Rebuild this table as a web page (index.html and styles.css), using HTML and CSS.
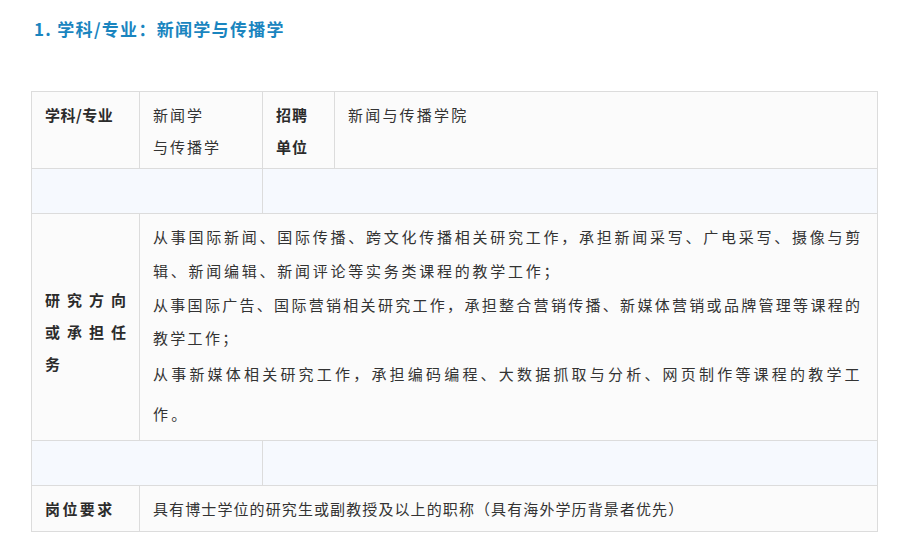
FILE: index.html
```html
<!DOCTYPE html>
<html lang="zh-CN">
<head>
<meta charset="utf-8">
<title>新闻学与传播学</title>
<link rel="stylesheet" href="styles.css">
</head>
<body>
<div class="page">
  <h3 class="title">1. 学科/专业：新闻学与传播学</h3>
  <table class="job">
    <colgroup>
      <col class="c1"><col class="c2"><col class="c3"><col class="c4">
    </colgroup>
    <tr class="r1">
      <td class="th th-subject">学科/专业</td>
      <td class="val val-major">新闻学<br>与传播学</td>
      <td class="th th-unit">招聘<br>单位</td>
      <td class="val val-unit">新闻与传播学院</td>
    </tr>
    <tr class="blank">
      <td colspan="2"></td>
      <td colspan="2"></td>
    </tr>
    <tr class="r3">
      <td class="th th-task">研究方向<br>或承担任<br>务</td>
      <td class="val val-task" colspan="3">
        <p class="p1">从事国际新闻、国际传播、跨文化传播相关研究工作，承担新闻采写、广电采写、摄像与剪辑、新闻编辑、新闻评论等实务类课程的教学工作；</p>
        <p class="p2">从事国际广告、国际营销相关研究工作，承担整合营销传播、新媒体营销或品牌管理等课程的教学工作；</p>
        <p class="p3">从事新媒体相关研究工作，承担编码编程、大数据抓取与分析、网页制作等课程的教学工作。</p>
      </td>
    </tr>
    <tr class="blank">
      <td colspan="2"></td>
      <td colspan="2"></td>
    </tr>
    <tr class="r5">
      <td class="th th-req">岗位要求</td>
      <td class="val val-req" colspan="3">具有博士学位的研究生或副教授及以上的职称（具有海外学历背景者优先）</td>
    </tr>
  </table>
</div>
</body>
</html>
```

FILE: styles.css
```css
html, body {
  margin: 0;
  padding: 0;
  background: #ffffff;
}

body {
  font-family: "Noto Sans CJK SC", "Noto Sans", "Liberation Sans", sans-serif;
  color: #333333;
}

.page {
  padding: 17px 0 0 31px;
}

.title {
  margin: 0 0 50px 3px;
  font-size: 17px;
  line-height: 24px;
  font-weight: bold;
  color: #1a85bf;
  letter-spacing: 1.3px;
}

.job {
  border-collapse: collapse;
  table-layout: fixed;
  width: 846px;
  font-size: 15px;
}

.c1 { width: 108px; }
.c2 { width: 123px; }
.c3 { width: 72px; }
.c4 { width: 543px; }

.job td {
  border: 1px solid #dcdcdc;
  padding: 0 4px 0 13px;
  vertical-align: top;
}

.r1 td,
.r3 td,
.r5 td {
  background: #fbfbfb;
}

.blank td {
  background: #f6f9fe;
  height: 44px;
  padding: 0;
}

.th {
  font-weight: bold;
  color: #2b2b2b;
}

.r1 td {
  padding-top: 7px;
  padding-bottom: 5px;
  line-height: 32px;
  height: 64px;
}

.th-subject { letter-spacing: 0.5px; }
.val-major { letter-spacing: 2px; }
.th-unit { letter-spacing: 1px; }
.val-unit { letter-spacing: 2.2px; }

.r3 td.th-task {
  vertical-align: middle;
  line-height: 32px;
  letter-spacing: 7px;
  padding-top: 10px;
  padding-right: 0;
  white-space: nowrap;
}

.r3 td.val-task {
  padding-top: 6px;
  padding-bottom: 6px;
  padding-right: 8px;
}

.val-task p {
  margin: 0;
}

.p1 { line-height: 34px; letter-spacing: 2.75px; }
.p2 { line-height: 33px; letter-spacing: 2.3px; }
.p3 { line-height: 40px; letter-spacing: 3.2px; }

.r5 td {
  vertical-align: middle;
  height: 45px;
  line-height: 24px;
}

.th-req { letter-spacing: 2.4px; }
.val-req { letter-spacing: 1.1px; }
```
